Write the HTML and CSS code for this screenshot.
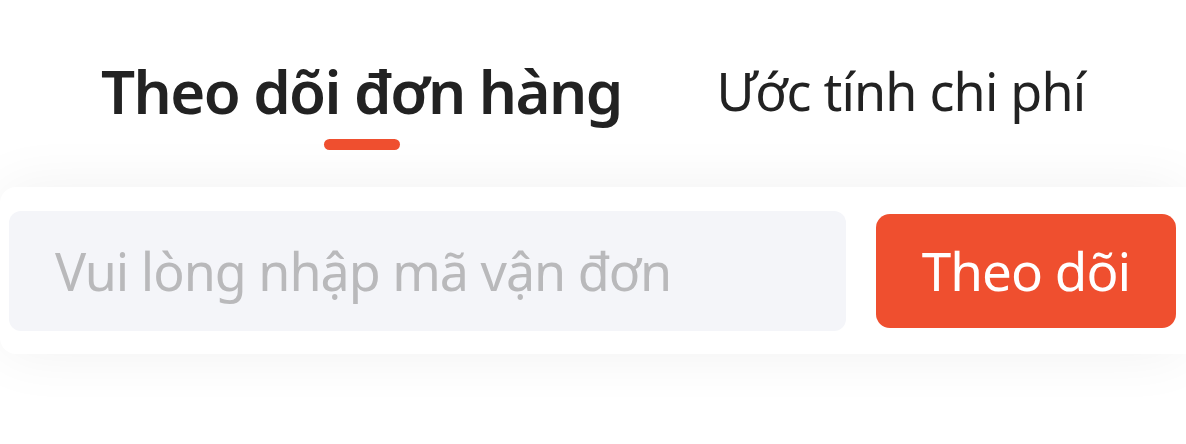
FILE: index.html
```html
<!DOCTYPE html>
<html lang="vi">
<head>
<meta charset="utf-8">
<link rel="stylesheet" href="styles.css">
</head>
<body>
<div class="page">
  <nav class="tabs">
    <div class="tab active">Theo dõi đơn hàng<span class="bar"></span></div>
    <div class="tab">Ước tính chi phí</div>
  </nav>
  <div class="card">
    <div class="input">Vui lòng nhập mã vận đơn</div>
    <button class="btn">Theo dõi</button>
  </div>
</div>
</body>
</html>
```
FILE: styles.css
```css
html, body { margin: 0; padding: 0; background: #fff; }
body { width: 1186px; height: 444px; overflow: hidden; font-family: "Noto Sans", "Open Sans", sans-serif; }
.page { padding-top: 51px; }
.tabs { display: flex; gap: 95px; padding-left: 101px; height: 136px; align-items: flex-start; }
.tab { position: relative; font-size: 52px; line-height: 80px; height: 80px; color: #222; letter-spacing: -0.8px; white-space: nowrap; }
.tab.active { font-size: 60px; font-weight: 600; letter-spacing: -1.6px; }
.bar { position: absolute; left: 223px; top: 88px; width: 76px; height: 11px; border-radius: 6px; background: #ef4f2f; }
.card { display: flex; align-items: center; gap: 30px; height: 167px; padding: 0 10px 0 9px; background: #fff; border-radius: 16px 0 0 16px; box-shadow: 0 0 60px rgba(0,0,0,0.06); }
.input { flex: 0 0 837px; height: 120px; box-sizing: border-box; padding-left: 46px; display: flex; align-items: center; background: #f4f5f9; border-radius: 12px; color: #b9b9bb; font-size: 52px; letter-spacing: -1px; white-space: nowrap; }
.btn { width: 300px; height: 114px; border: 0; border-radius: 14px; background: #ef4f2f; color: #fff; font-family: inherit; font-size: 53px; letter-spacing: -1px; padding: 0; }
```
